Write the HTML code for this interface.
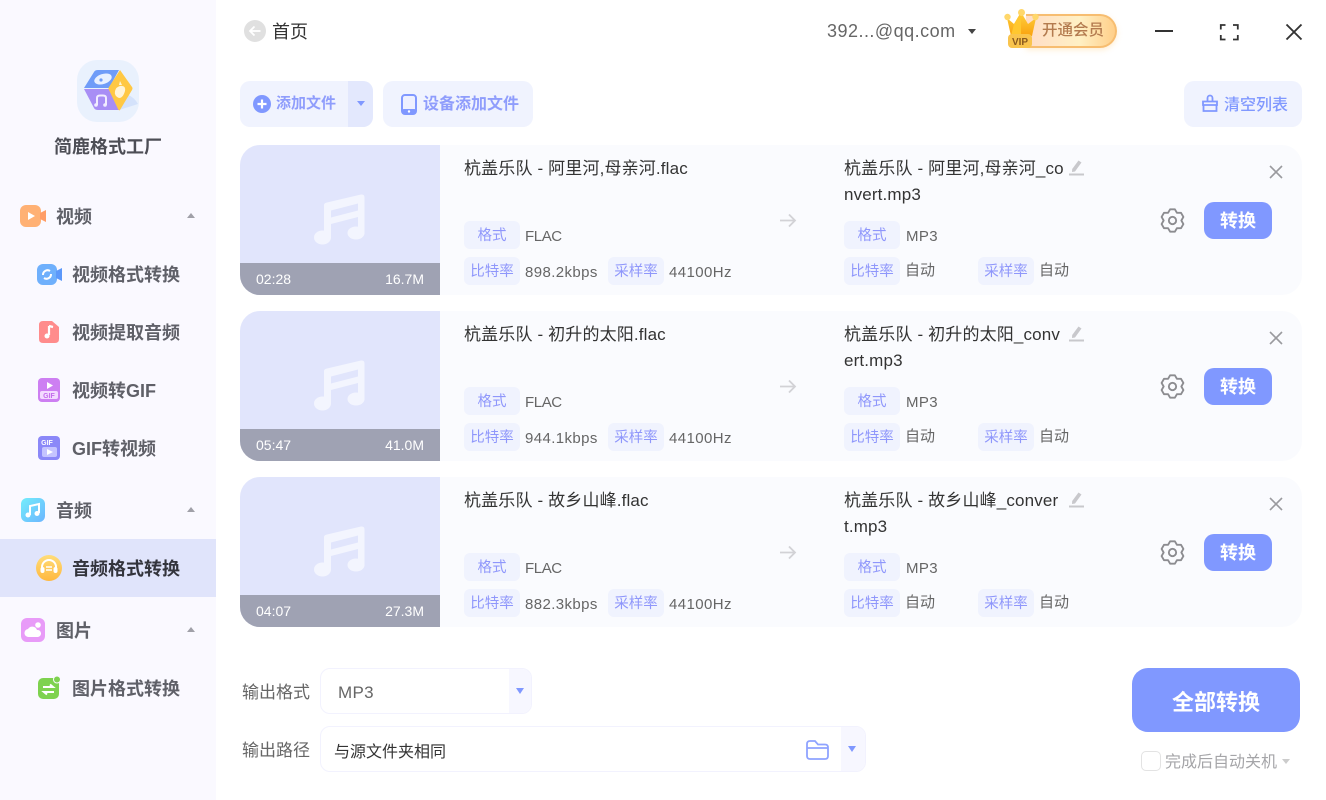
<!DOCTYPE html>
<html lang="zh"><head><meta charset="utf-8"><title>简鹿格式工厂</title>
<style>
*{box-sizing:border-box;margin:0;padding:0}
html,body{width:1326px;height:800px;overflow:hidden;background:#fff}
body{position:relative;font-family:"Liberation Sans","Noto Sans CJK SC",sans-serif;color:#333}
.a,.t{position:absolute}
.t{white-space:nowrap;line-height:20px}
svg{position:absolute;overflow:visible}
.side{position:absolute;left:0;top:0;width:216px;height:800px;background:#faf9ff}
.nav{position:absolute;font-size:18px;font-weight:700;color:#5f6068;line-height:24px;white-space:nowrap}
.tri{position:absolute;width:0;height:0;border-left:4px solid transparent;border-right:4px solid transparent;border-bottom:5px solid #a0a0a8}
.card{position:absolute;left:240px;width:1062px;height:150px;background:#fafbfe;border-radius:20px;overflow:hidden}
.thumb{position:absolute;left:0;top:0;width:200px;height:150px;background:#e1e5fc}
.bar{position:absolute;left:0;bottom:0;width:200px;height:32px;background:#9fa2b3;color:#fff;font-size:14px;line-height:32px}
.tag{position:absolute;height:28px;background:#f0f3fe;border-radius:6px;color:#8f97fb;font-size:14.5px;line-height:31px;text-align:center}
.val{position:absolute;font-size:15px;color:#666;line-height:31px;white-space:nowrap;letter-spacing:.4px}
.zd{position:absolute;font-size:15px;color:#666;line-height:28px;white-space:nowrap}
.name{position:absolute;font-size:17px;color:#333;line-height:26px;white-space:nowrap;letter-spacing:.15px}
.btn{position:absolute;left:964px;top:57px;width:68px;height:37px;background:#8098ff;border-radius:10px;color:#fff;font-size:18px;font-weight:700;text-align:center;line-height:38px}
.tool{position:absolute;background:#f0f3fe;border-radius:10px;top:81px;height:46px}
.inp{position:absolute;background:#fff;border:1px solid #f2f2fe;border-radius:10px;overflow:hidden}
.inp i{position:absolute;right:0;top:0;bottom:0;width:22px;background:#f7f7ff}
.dn{position:absolute;width:0;height:0;border-left:4.5px solid transparent;border-right:4.5px solid transparent;border-top:6px solid #8098ff}
</style></head><body>

<div class="side"></div>
<svg style="left:77px;top:60px" width="62" height="62" viewBox="0 0 62 62">
<rect width="62" height="62" rx="20" fill="#e9f1fd"/>
<path d="M42 50L61 44Q58 38 50 34Z" fill="#d4e2fb"/>
<path d="M7 28L17 12Q18 10 21 10H42L32 28Z" fill="#6f9cf8"/>
<path d="M7 29H32L42 50H21Q18 50 17 48Z" fill="#a88ef5"/>
<path d="M43 10L55 27Q56 28 55 30L43 50Q42 51 41 49L32 30Q31 28 32 27Z" fill="#ffc844"/>
<ellipse cx="26" cy="19" rx="9" ry="5" transform="rotate(-18 26 19)" fill="#e8f0ff"/>
<circle cx="24" cy="20" r="1.600" fill="#6f9cf8"/>
<path d="M43 26Q49 25 48 31Q46 38 42 38Q37 36 38 31Q39 27 43 26ZM43 21l2 4-3 0z" fill="#fff4d8"/>
<path d="M20 45V38Q20 35.500 23 35.500H26Q29 35.500 29 38V45" fill="none" stroke="#f1ecff" stroke-width="2"/>
<circle cx="19" cy="45" r="1.800" fill="#f1ecff"/><circle cx="28" cy="45" r="1.800" fill="#f1ecff"/>
</svg>
<div class="nav" style="left:54px;top:135px;font-size:18px;color:#4d4e56">简鹿格式工厂</div>

<svg style="left:20px;top:205px" width="27" height="22" viewBox="0 0 27 22"><rect width="21" height="22" rx="6" fill="#ffb174"/><path d="M20 8l6-3v12l-6-3z" fill="#ff9d66"/><path d="M8 7l7 4-7 4z" fill="#fff"/></svg>
<div class="nav" style="left:56px;top:205px">视频</div><div class="tri" style="left:187px;top:213px"></div>

<svg style="left:37px;top:264px" width="25" height="21" viewBox="0 0 25 21"><rect width="20" height="21" rx="6" fill="#6fb0fc"/><path d="M19 7l6-3v13l-6-3z" fill="#5c98fa"/><path d="M6 11a4.500 4.500 0 0 1 7-4M14 10a4.500 4.500 0 0 1-7 4" fill="none" stroke="#fff" stroke-width="2"/></svg>
<div class="nav" style="left:72px;top:263px">视频格式转换</div>

<svg style="left:39px;top:321px" width="20" height="22" viewBox="0 0 20 22"><path d="M4 0H13L20 6V18Q20 22 16 22H4Q0 22 0 18V4Q0 0 4 0Z" fill="#ff8c8c"/><path d="M10 5V14M10 5l4 1" stroke="#fff" stroke-width="2.200" fill="none"/><circle cx="8" cy="15" r="2.500" fill="#fff"/></svg>
<div class="nav" style="left:72px;top:321px">视频提取音频</div>

<svg style="left:38px;top:378px" width="22" height="24" viewBox="0 0 22 24"><rect width="22" height="24" rx="4" fill="#cd7ff2"/><path d="M9 4l6 3.500-6 3.500z" fill="#fff"/><rect x="2" y="13" width="18" height="8" rx="2" fill="#f3daff"/><text x="11" y="20" font-size="7" font-weight="700" fill="#c46bed" text-anchor="middle" font-family="Liberation Sans">GIF</text></svg>
<div class="nav" style="left:72px;top:379px">视频转GIF</div>

<svg style="left:38px;top:436px" width="22" height="24" viewBox="0 0 22 24"><rect width="22" height="24" rx="4" fill="#8b88f8"/><text x="9" y="9" font-size="7" font-weight="700" fill="#fff" text-anchor="middle" font-family="Liberation Sans">GIF</text><rect x="4" y="11" width="15" height="10" rx="2" fill="#c5c4ff"/><path d="M9 13l6 3-6 3z" fill="#fff"/></svg>
<div class="nav" style="left:72px;top:437px">GIF转视频</div>

<svg style="left:21px;top:498px" width="24" height="24" viewBox="0 0 24 24"><defs><linearGradient id="g1" x1="0" y1="0" x2="1" y2="1"><stop offset="0" stop-color="#73edfb"/><stop offset="1" stop-color="#6cb5ff"/></linearGradient></defs><rect width="24" height="24" rx="6" fill="url(#g1)"/><path d="M9 17V8L18 6V15" fill="none" stroke="#fff" stroke-width="2"/><circle cx="7" cy="17" r="2.500" fill="#fff"/><circle cx="16" cy="15.500" r="2.500" fill="#fff"/></svg>
<div class="nav" style="left:56px;top:499px">音频</div><div class="tri" style="left:187px;top:507px"></div>

<div class="a" style="left:0;top:539px;width:216px;height:58px;background:#e0e4fb"></div>
<svg style="left:36px;top:555px" width="26" height="26" viewBox="0 0 26 26"><defs><linearGradient id="g2" x1="0" y1="0" x2="0" y2="1"><stop offset="0" stop-color="#ffdd7a"/><stop offset="1" stop-color="#ffb83f"/></linearGradient></defs><circle cx="13" cy="13" r="13" fill="url(#g2)"/><path d="M6 14V12a7 7 0 0 1 14 0v2" fill="none" stroke="#fff" stroke-width="2"/><rect x="4.500" y="12" width="4" height="6" rx="2" fill="#fff"/><rect x="17.500" y="12" width="4" height="6" rx="2" fill="#fff"/><path d="M10 12h6M10 15h6" stroke="#fff" stroke-width="1.500"/></svg>
<div class="nav" style="left:72px;top:557px;color:#33343c">音频格式转换</div>

<svg style="left:21px;top:618px" width="24" height="24" viewBox="0 0 24 24"><rect width="24" height="24" rx="6" fill="#e89bf8"/><circle cx="17" cy="7" r="2.800" fill="#fff"/><path d="M8 19a4 4 0 0 1-1-8 5 5 0 0 1 9 1 3.500 3.500 0 0 1 1 7z" fill="#fff"/></svg>
<div class="nav" style="left:56px;top:619px">图片</div><div class="tri" style="left:187px;top:627px"></div>

<svg style="left:38px;top:676px" width="23" height="23" viewBox="0 0 23 23"><rect y="2" width="21" height="21" rx="5" fill="#7ed24f"/><circle cx="19" cy="3.500" r="3.500" fill="#7ed24f" stroke="#faf9ff" stroke-width="1"/><path d="M5 11h10l-3-2.500M16 16H6l3 2.500" fill="none" stroke="#fff" stroke-width="2"/></svg>
<div class="nav" style="left:72px;top:677px">图片格式转换</div>

<svg style="left:244px;top:20px" width="22" height="22" viewBox="0 0 22 22"><circle cx="11" cy="11" r="11" fill="#e0e0e0"/><path d="M16.500 11H6.500M10.500 6.500L6 11l4.500 4.500" fill="none" stroke="#fff" stroke-width="1.800"/></svg>
<div class="t" style="left:272px;top:22px;font-size:18px;color:#333">首页</div>

<div class="t" style="left:827px;top:21px;font-size:18px;color:#666;letter-spacing:.48px">392...@qq.com</div>
<div class="a" style="left:968px;top:29px;width:0;height:0;border-left:4.500px solid transparent;border-right:4.500px solid transparent;border-top:5.500px solid #444"></div>

<div class="a" style="left:1026px;top:14px;width:91px;height:34px;border-radius:0 17px 17px 0;background:linear-gradient(90deg,#ffdcc6,#fff0c4 60%,#ffcf89);border:2px solid #f7bd70;border-left:0;box-shadow:0 2px 6px rgba(255,200,110,.3)"></div>
<svg style="left:1004px;top:9px" width="34" height="40" viewBox="0 0 34 40"><defs><linearGradient id="g3" x1="0" y1="0" x2="0" y2="1"><stop offset="0" stop-color="#ffd23f"/><stop offset="1" stop-color="#f9a20f"/></linearGradient></defs><path d="M3 9L7 27H28L32 9L24 15L17 3L10 15Z" fill="url(#g3)"/><path d="M17 3L10 15L7 27H17Z" fill="#ffc72f"/><circle cx="3.500" cy="8" r="3.200" fill="#ffd76a"/><circle cx="17.500" cy="3.500" r="3.500" fill="#ffd76a"/><circle cx="31.500" cy="8" r="3.200" fill="#ffd76a"/><rect x="4" y="25" width="24" height="14" rx="4" fill="#f9c44d"/><text x="16" y="36" font-size="10" font-weight="700" fill="#8a5a1e" text-anchor="middle" font-family="Liberation Sans">VIP</text></svg>
<div class="t" style="left:1042px;top:21px;font-size:15.5px;color:#b47b4f;font-weight:500">开通会员</div>

<svg style="left:1155px;top:24px" width="150" height="16" viewBox="0 0 150 16" fill="none" stroke="#333"><path d="M0 7H18" stroke-width="2"/><path d="M65.800 5.500V1H70.500M78 1H82.800V5.500M82.800 11V15.500H78M70.500 15.500H65.800V11" stroke-width="1.800"/><path d="M131.500 0.500L146.500 15.500M146.500 0.500L131.500 15.500" stroke-width="1.900"/></svg>

<div class="tool" style="left:240px;width:133px"></div>
<div class="a" style="left:348px;top:81px;width:25px;height:46px;background:#e3e8fd;border-radius:0 10px 10px 0"></div>
<svg style="left:253px;top:95px" width="18" height="18" viewBox="0 0 18 18"><circle cx="9" cy="9" r="9" fill="#8098ff"/><path d="M9 4.500V13.500M4.500 9H13.500" stroke="#fff" stroke-width="2.200"/></svg>
<div class="t" style="left:276px;top:94px;font-size:15px;font-weight:700;color:#8f9dfc">添加文件</div>
<div class="dn" style="left:357px;top:101px;border-left-width:4px;border-right-width:4px;border-top-width:5px"></div>
<div class="tool" style="left:383px;width:150px"></div>
<svg style="left:401px;top:94px" width="16" height="21" viewBox="0 0 16 21"><rect x="1" y="1" width="14" height="19" rx="3" fill="#eef0ff" stroke="#8098ff" stroke-width="2"/><rect x="1" y="15" width="14" height="5" rx="2" fill="#8098ff"/><circle cx="8" cy="17.500" r="1.200" fill="#fff"/></svg>
<div class="t" style="left:423px;top:95px;font-size:16px;font-weight:700;color:#8f9dfc">设备添加文件</div>
<div class="tool" style="left:1184px;width:118px"></div>
<svg style="left:1201px;top:95px" width="18" height="18" viewBox="0 0 18 18" fill="none" stroke="#8098ff" stroke-width="1.800"><path d="M6.500 6V3a2 2 0 0 1 5 0V6"/><path d="M2 6.500H16V10H2Z"/><path d="M2.500 10V16H15.500V10"/></svg>
<div class="t" style="left:1224px;top:96px;font-size:16px;color:#8098ff;font-weight:500">清空列表</div>

<div class="card" style="top:145px">
<div class="thumb"><svg style="left:75px;top:49px" width="51" height="52" viewBox="0 0 51 52" fill="#f3f5fe"><path fill-rule="evenodd" d="M9 11Q9 9 12 8.500L46 .5Q49.500 0 49.500 3.500V40H43V23L16 30V44H9ZM16 16.500V23.500L43 16.500V9.500Z"/><ellipse cx="7.500" cy="43.500" rx="8.500" ry="7"/><ellipse cx="41" cy="39" rx="8.500" ry="6.500"/></svg>
<div class="bar"><span class="a" style="left:16px">02:28</span><span class="a" style="right:16px">16.7M</span></div></div>
<div class="name" style="left:224px;top:11px">杭盖乐队 - 阿里河,母亲河.flac</div>
<div class="tag" style="left:224px;top:76px;width:56px">格式</div><div class="val" style="left:285px;top:76px;letter-spacing:-.4px">FLAC</div>
<div class="tag" style="left:224px;top:112px;width:56px">比特率</div><div class="val" style="left:285px;top:112px">898.2kbps</div>
<div class="tag" style="left:368px;top:112px;width:56px">采样率</div><div class="val" style="left:429px;top:112px">44100Hz</div>
<svg style="left:539px;top:68px" width="18" height="15" viewBox="0 0 18 15" fill="none" stroke="#d2d2d6" stroke-width="1.800"><path d="M1 7.500H16M10 1.500L16 7.500L10 13.500"/></svg>
<div class="name" style="left:604px;top:11px">杭盖乐队 - 阿里河,母亲河_co<br>nvert.mp3</div>
<svg style="left:829px;top:14px" width="16" height="17" viewBox="0 0 16 17"><path d="M9.500 1.500L12.500 3.500L6 12.500L3 13L3.200 10Z" fill="#c8c8cc"/><rect x="0" y="14.500" width="15" height="2" fill="#c8c8cc"/></svg>
<div class="tag" style="left:604px;top:76px;width:56px">格式</div><div class="val" style="left:666px;top:76px">MP3</div>
<div class="tag" style="left:604px;top:112px;width:56px">比特率</div><div class="zd" style="left:665px;top:112px">自动</div>
<div class="tag" style="left:738px;top:112px;width:56px">采样率</div><div class="zd" style="left:799px;top:112px">自动</div>
<svg style="left:920px;top:63px" width="25" height="25" viewBox="0 0 24 24" fill="none" stroke="#8c8c90" stroke-width="1.800" stroke-linejoin="round"><path d="M9.710 1.240H14.290L16.250 4.640H20.170L22.460 8.600L20.500 12L22.460 15.400L20.170 19.360H16.250L14.290 22.760H9.710L7.750 19.360H3.830L1.540 15.400L3.500 12L1.540 8.600L3.830 4.640H7.750Z"/><circle cx="12" cy="12" r="3.500"/></svg>
<div class="btn">转换</div>
<svg style="left:1029px;top:20px" width="14" height="14" viewBox="0 0 14 14" stroke="#9a9a9e" stroke-width="1.600"><path d="M1 1L13 13M13 1L1 13"/></svg>
</div>

<div class="card" style="top:311px">
<div class="thumb"><svg style="left:75px;top:49px" width="51" height="52" viewBox="0 0 51 52" fill="#f3f5fe"><path fill-rule="evenodd" d="M9 11Q9 9 12 8.500L46 .5Q49.500 0 49.500 3.500V40H43V23L16 30V44H9ZM16 16.500V23.500L43 16.500V9.500Z"/><ellipse cx="7.500" cy="43.500" rx="8.500" ry="7"/><ellipse cx="41" cy="39" rx="8.500" ry="6.500"/></svg>
<div class="bar"><span class="a" style="left:16px">05:47</span><span class="a" style="right:16px">41.0M</span></div></div>
<div class="name" style="left:224px;top:11px">杭盖乐队 - 初升的太阳.flac</div>
<div class="tag" style="left:224px;top:76px;width:56px">格式</div><div class="val" style="left:285px;top:76px;letter-spacing:-.4px">FLAC</div>
<div class="tag" style="left:224px;top:112px;width:56px">比特率</div><div class="val" style="left:285px;top:112px">944.1kbps</div>
<div class="tag" style="left:368px;top:112px;width:56px">采样率</div><div class="val" style="left:429px;top:112px">44100Hz</div>
<svg style="left:539px;top:68px" width="18" height="15" viewBox="0 0 18 15" fill="none" stroke="#d2d2d6" stroke-width="1.800"><path d="M1 7.500H16M10 1.500L16 7.500L10 13.500"/></svg>
<div class="name" style="left:604px;top:11px">杭盖乐队 - 初升的太阳_conv<br>ert.mp3</div>
<svg style="left:829px;top:14px" width="16" height="17" viewBox="0 0 16 17"><path d="M9.500 1.500L12.500 3.500L6 12.500L3 13L3.200 10Z" fill="#c8c8cc"/><rect x="0" y="14.500" width="15" height="2" fill="#c8c8cc"/></svg>
<div class="tag" style="left:604px;top:76px;width:56px">格式</div><div class="val" style="left:666px;top:76px">MP3</div>
<div class="tag" style="left:604px;top:112px;width:56px">比特率</div><div class="zd" style="left:665px;top:112px">自动</div>
<div class="tag" style="left:738px;top:112px;width:56px">采样率</div><div class="zd" style="left:799px;top:112px">自动</div>
<svg style="left:920px;top:63px" width="25" height="25" viewBox="0 0 24 24" fill="none" stroke="#8c8c90" stroke-width="1.800" stroke-linejoin="round"><path d="M9.710 1.240H14.290L16.250 4.640H20.170L22.460 8.600L20.500 12L22.460 15.400L20.170 19.360H16.250L14.290 22.760H9.710L7.750 19.360H3.830L1.540 15.400L3.500 12L1.540 8.600L3.830 4.640H7.750Z"/><circle cx="12" cy="12" r="3.500"/></svg>
<div class="btn">转换</div>
<svg style="left:1029px;top:20px" width="14" height="14" viewBox="0 0 14 14" stroke="#9a9a9e" stroke-width="1.600"><path d="M1 1L13 13M13 1L1 13"/></svg>
</div>

<div class="card" style="top:477px">
<div class="thumb"><svg style="left:75px;top:49px" width="51" height="52" viewBox="0 0 51 52" fill="#f3f5fe"><path fill-rule="evenodd" d="M9 11Q9 9 12 8.500L46 .5Q49.500 0 49.500 3.500V40H43V23L16 30V44H9ZM16 16.500V23.500L43 16.500V9.500Z"/><ellipse cx="7.500" cy="43.500" rx="8.500" ry="7"/><ellipse cx="41" cy="39" rx="8.500" ry="6.500"/></svg>
<div class="bar"><span class="a" style="left:16px">04:07</span><span class="a" style="right:16px">27.3M</span></div></div>
<div class="name" style="left:224px;top:11px">杭盖乐队 - 故乡山峰.flac</div>
<div class="tag" style="left:224px;top:76px;width:56px">格式</div><div class="val" style="left:285px;top:76px;letter-spacing:-.4px">FLAC</div>
<div class="tag" style="left:224px;top:112px;width:56px">比特率</div><div class="val" style="left:285px;top:112px">882.3kbps</div>
<div class="tag" style="left:368px;top:112px;width:56px">采样率</div><div class="val" style="left:429px;top:112px">44100Hz</div>
<svg style="left:539px;top:68px" width="18" height="15" viewBox="0 0 18 15" fill="none" stroke="#d2d2d6" stroke-width="1.800"><path d="M1 7.500H16M10 1.500L16 7.500L10 13.500"/></svg>
<div class="name" style="left:604px;top:11px">杭盖乐队 - 故乡山峰_conver<br>t.mp3</div>
<svg style="left:829px;top:14px" width="16" height="17" viewBox="0 0 16 17"><path d="M9.500 1.500L12.500 3.500L6 12.500L3 13L3.200 10Z" fill="#c8c8cc"/><rect x="0" y="14.500" width="15" height="2" fill="#c8c8cc"/></svg>
<div class="tag" style="left:604px;top:76px;width:56px">格式</div><div class="val" style="left:666px;top:76px">MP3</div>
<div class="tag" style="left:604px;top:112px;width:56px">比特率</div><div class="zd" style="left:665px;top:112px">自动</div>
<div class="tag" style="left:738px;top:112px;width:56px">采样率</div><div class="zd" style="left:799px;top:112px">自动</div>
<svg style="left:920px;top:63px" width="25" height="25" viewBox="0 0 24 24" fill="none" stroke="#8c8c90" stroke-width="1.800" stroke-linejoin="round"><path d="M9.710 1.240H14.290L16.250 4.640H20.170L22.460 8.600L20.500 12L22.460 15.400L20.170 19.360H16.250L14.290 22.760H9.710L7.750 19.360H3.830L1.540 15.400L3.500 12L1.540 8.600L3.830 4.640H7.750Z"/><circle cx="12" cy="12" r="3.500"/></svg>
<div class="btn">转换</div>
<svg style="left:1029px;top:20px" width="14" height="14" viewBox="0 0 14 14" stroke="#9a9a9e" stroke-width="1.600"><path d="M1 1L13 13M13 1L1 13"/></svg>
</div>

<div class="t" style="left:242px;top:683px;font-size:17px;color:#666">输出格式</div>
<div class="inp" style="left:320px;top:668px;width:212px;height:46px"><i></i></div>
<div class="t" style="left:338px;top:683px;font-size:17px;color:#666;letter-spacing:.3px">MP3</div>
<div class="dn" style="left:516px;top:688px"></div>

<div class="t" style="left:242px;top:741px;font-size:17px;color:#666">输出路径</div>
<div class="inp" style="left:320px;top:726px;width:546px;height:46px"><i style="width:24px"></i></div>
<div class="t" style="left:334px;top:743px;font-size:16px;color:#333">与源文件夹相同</div>
<svg style="left:806px;top:740px" width="23" height="20" viewBox="0 0 23 20" fill="none" stroke="#8fa3ff" stroke-width="1.800"><path d="M1 5V4Q1 1 4 1H9L12 4.500H19Q22 4.500 22 7.500V16Q22 19 19 19H4Q1 19 1 16Z"/><path d="M1 8H22"/></svg>
<div class="dn" style="left:848px;top:746px"></div>

<div class="a" style="left:1132px;top:668px;width:168px;height:64px;background:#8098ff;border-radius:16px;color:#fff;font-size:22px;font-weight:700;text-align:center;line-height:69px">全部转换</div>
<div class="a" style="left:1141px;top:751px;width:20px;height:20px;border:1px solid #e3e3e3;border-radius:5px;background:#fff"></div>
<div class="t" style="left:1165px;top:753px;font-size:16px;color:#a5a5a8">完成后自动关机</div>
<div class="a" style="left:1282px;top:759px;width:0;height:0;border-left:4px solid transparent;border-right:4px solid transparent;border-top:5px solid #ccc"></div>
</body></html>
